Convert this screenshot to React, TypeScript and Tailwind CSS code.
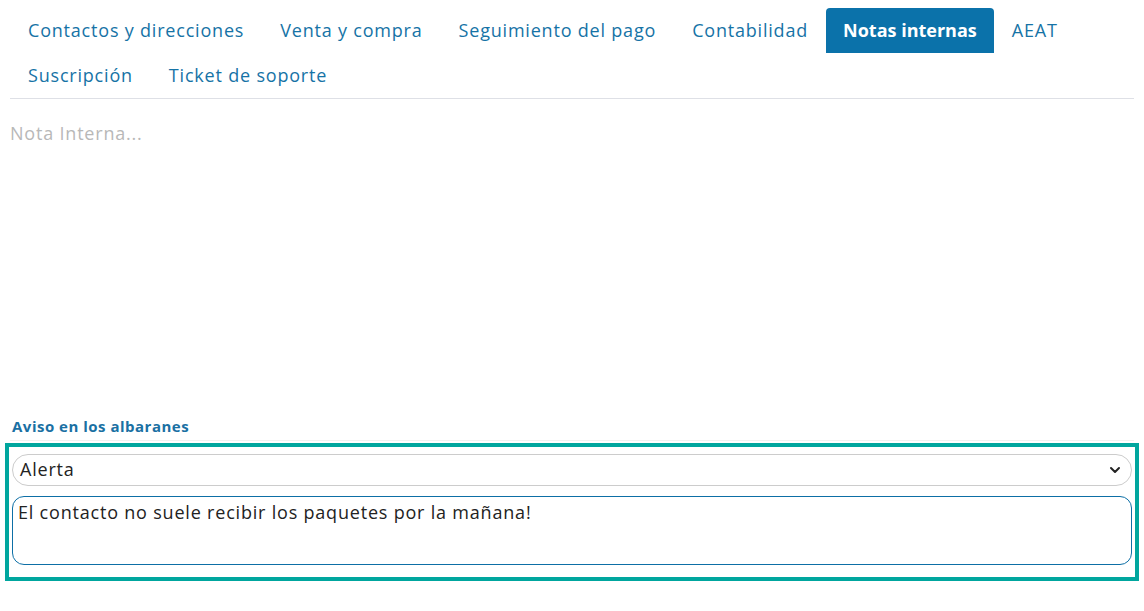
import { ChevronDown } from 'lucide-react'

const tabs = [
  ['Contactos y direcciones', 'Venta y compra', 'Seguimiento del pago', 'Contabilidad', 'Notas internas', 'AEAT'],
  ['Suscripción', 'Ticket de soporte'],
]

function App() {
  return (
    <div
      className="min-h-screen bg-white px-[10px] pt-2 text-[18px] tracking-[0.8px] text-[#222]"
      style={{ fontFamily: '"Open Sans", sans-serif' }}
    >
      <nav className="border-b border-[#dee0e6]">
        {tabs.map((row, i) => (
          <div key={i} className="flex">
            {row.map((t) => (
              <button
                key={t}
                className={
                  t === 'Notas internas'
                    ? 'h-[45px] rounded-t-[4px] bg-[#0b72aa] px-[17px] font-bold tracking-[0px] text-white'
                    : 'h-[45px] px-[18px] text-[#1673a6]'
                }
              >
                {t}
              </button>
            ))}
          </div>
        ))}
      </nav>

      <textarea
        className="mt-[21px] h-[283px] w-full resize-none outline-none placeholder:text-[#b8b8b8]"
        placeholder="Nota Interna..."
      />

      <div className="mt-[5px] border-b border-[#f1f1f1] pb-[2px] pl-[2px] text-[15px] font-bold tracking-[0.5px] text-[#1a70a3]">
        Aviso en los albaranes
      </div>

      <div className="-mx-[5px] mt-[2px] flex flex-col gap-[10px] border-[4px] border-[#00a69e] px-[3px] pt-[7px] pb-[12px]">
        <div className="flex h-[32px] items-center justify-between rounded-[16px] border border-[#cccccc] pl-[7px] pr-[8px]">
          <span>Alerta</span>
          <ChevronDown size={16} strokeWidth={3} className="text-[#222]" />
        </div>
        <div className="h-[69px] rounded-[12px] border border-[#0d6fa6] px-[5px] pt-[2px]">
          El contacto no suele recibir los paquetes por la mañana!
        </div>
      </div>
    </div>
  )
}

export default App
